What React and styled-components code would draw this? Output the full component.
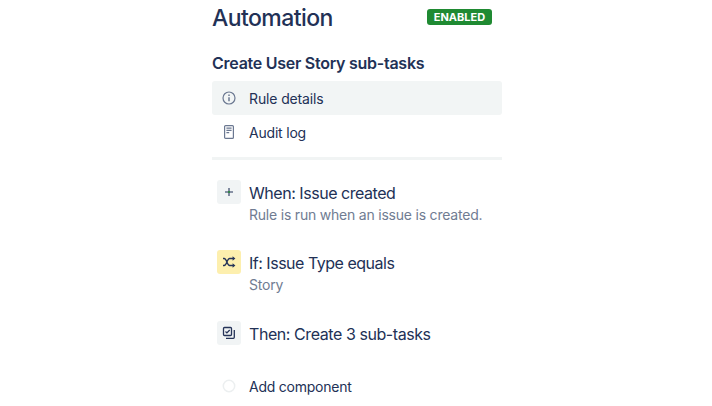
import React from "react";
import styled, { createGlobalStyle } from "styled-components";

const Global = createGlobalStyle`
  body { margin: 0; background: #fff; overflow: hidden; }
  * { box-sizing: border-box; }
`;

const Panel = styled.main`
  width: 290px;
  height: 406px;
  margin-left: 212px;
  overflow: hidden;
  font-family: Inter, "Liberation Sans", sans-serif;
  color: #223156;
  white-space: nowrap;
`;

const Header = styled.header`
  display: flex;
  justify-content: space-between;
  align-items: center;
  height: 36px;
  padding-right: 10px;
`;

const Title = styled.h1`
  margin: 0;
  font-size: 23px;
  line-height: 28px;
  font-weight: 500;
  letter-spacing: ${(p) => p.$tracking}px;
`;

const Lozenge = styled.span`
  display: flex;
  align-items: center;
  justify-content: center;
  width: 65px;
  height: 16px;
  margin-top: -2px;
  border-radius: 3px;
  background: #1f8a32;
  color: #fff;
  font-size: 11px;
  line-height: 16px;
  font-weight: 700;
`;

const RuleName = styled.h2`
  margin: 17px 0 8px;
  font-size: 16px;
  line-height: 20px;
  font-weight: 600;
  letter-spacing: ${(p) => p.$tracking}px;
`;

const NavItem = styled.div`
  display: flex;
  align-items: center;
  height: 34px;
  border-radius: 3px;
  background: ${(p) => (p.$active ? "#f2f5f5" : "transparent")};
`;

const IconSlot = styled.span`
  display: flex;
  flex: none;
  align-items: center;
  justify-content: center;
  width: 34px;
  height: 34px;
  margin-right: 3px;
`;

const Label = styled.span`
  font-size: 14px;
  line-height: 20px;
  padding-top: 2px;
  letter-spacing: ${(p) => p.$tracking}px;
`;

const Divider = styled.hr`
  height: 3px;
  margin: 8px 0 20px;
  border: 0;
  background: #f1f4f4;
`;

const Step = styled.section`
  display: flex;
  height: ${(p) => p.$height}px;
  padding-left: 5px;
`;

const Tile = styled.span`
  display: flex;
  flex: none;
  align-items: center;
  justify-content: center;
  width: 24px;
  height: 24px;
  margin-right: 8px;
  border-radius: 3px;
  background: ${(p) => (p.$condition ? "#fdefae" : "#f1f4f5")};
`;

const StepTitle = styled.div`
  padding-top: 2px;
  font-size: 16px;
  line-height: 22px;
  letter-spacing: ${(p) => p.$tracking}px;
`;

const Description = styled.div`
  font-size: 14px;
  line-height: 22px;
  color: #707c92;
  letter-spacing: ${(p) => p.$tracking}px;
`;

const Icon = styled.svg`
  display: block;
  fill: none;
  stroke: ${(p) => p.$color || "#263459"};
  stroke-width: ${(p) => p.$stroke || 1.4};
`;

const InfoIcon = () => (
  <Icon width="14" height="14" viewBox="0 0 14 14" $color="#6b7891" $stroke={1.2}>
    <circle cx="7" cy="7" r="6" />
    <path d="M7 6.3v3.9M7 3.6v1.5" strokeWidth="1.5" />
  </Icon>
);

const LogIcon = () => (
  <Icon width="12" height="14" viewBox="0 0 12 14" $color="#6b7891" $stroke={1.2}>
    <rect x="1.6" y=".6" width="8.8" height="12.8" rx="1" />
    <path d="M3.4 3.2h5.2M3.4 5.4h5.2M3.4 7.6h2.8" />
  </Icon>
);

const PlusIcon = () => (
  <Icon width="8" height="8" viewBox="0 0 8 8" $color="#65708a" $stroke={1.6}>
    <path d="M4 0v8M0 4h8" />
    <path d="M3 4h2" stroke="#1f8a32" />
  </Icon>
);

const ShuffleIcon = () => (
  <Icon width="14" height="12" viewBox="0 0 14 12" $stroke={1.3}>
    <path d="M1 2.5h1.2C4.8 2.5 5 9.5 7.6 9.5H11M1 9.5h1.2C4.8 9.5 5 2.5 7.6 2.5H11" />
    <path d="M10.6.3l2.8 2.2-2.8 2.2zM10.6 7.3l2.8 2.2-2.8 2.2z" fill="#263459" stroke="none" />
  </Icon>
);

const SubtasksIcon = () => (
  <Icon width="14" height="14" viewBox="0 0 14 14" $stroke={1.3}>
    <rect x="1.5" y="1.5" width="8" height="8" rx="1" />
    <path d="M3.5 5.6l1.4 1.3 2.8-2.9M12.3 4v7.3a1 1 0 0 1-1 1H4" />
  </Icon>
);

const CircleIcon = () => (
  <Icon width="14" height="14" viewBox="0 0 14 14" $color="#eceff0" $stroke={1.5}>
    <circle cx="7" cy="7" r="5.7" />
  </Icon>
);

export default function App() {
  return (
    <>
      <Global />
      <Panel>
        <Header>
          <Title $tracking={-0.57}>Automation</Title>
          <Lozenge>ENABLED</Lozenge>
        </Header>
        <RuleName $tracking={-0.26}>Create User Story sub-tasks</RuleName>
        <nav>
          <NavItem $active>
            <IconSlot><InfoIcon /></IconSlot>
            <Label $tracking={-0.13}>Rule details</Label>
          </NavItem>
          <NavItem>
            <IconSlot><LogIcon /></IconSlot>
            <Label $tracking={-0.2}>Audit log</Label>
          </NavItem>
        </nav>
        <Divider />
        <Step $height={70}>
          <Tile><PlusIcon /></Tile>
          <div>
            <StepTitle $tracking={-0.46}>When: Issue created</StepTitle>
            <Description $tracking={-0.21}>Rule is run when an issue is created.</Description>
          </div>
        </Step>
        <Step $height={71}>
          <Tile $condition><ShuffleIcon /></Tile>
          <div>
            <StepTitle $tracking={-0.49}>If: Issue Type equals</StepTitle>
            <Description $tracking={-0.2}>Story</Description>
          </div>
        </Step>
        <Step $height={48}>
          <Tile><SubtasksIcon /></Tile>
          <StepTitle $tracking={-0.43}>Then: Create 3 sub-tasks</StepTitle>
        </Step>
        <NavItem>
          <IconSlot><CircleIcon /></IconSlot>
          <Label $tracking={-0.24}>Add component</Label>
        </NavItem>
      </Panel>
    </>
  );
}
